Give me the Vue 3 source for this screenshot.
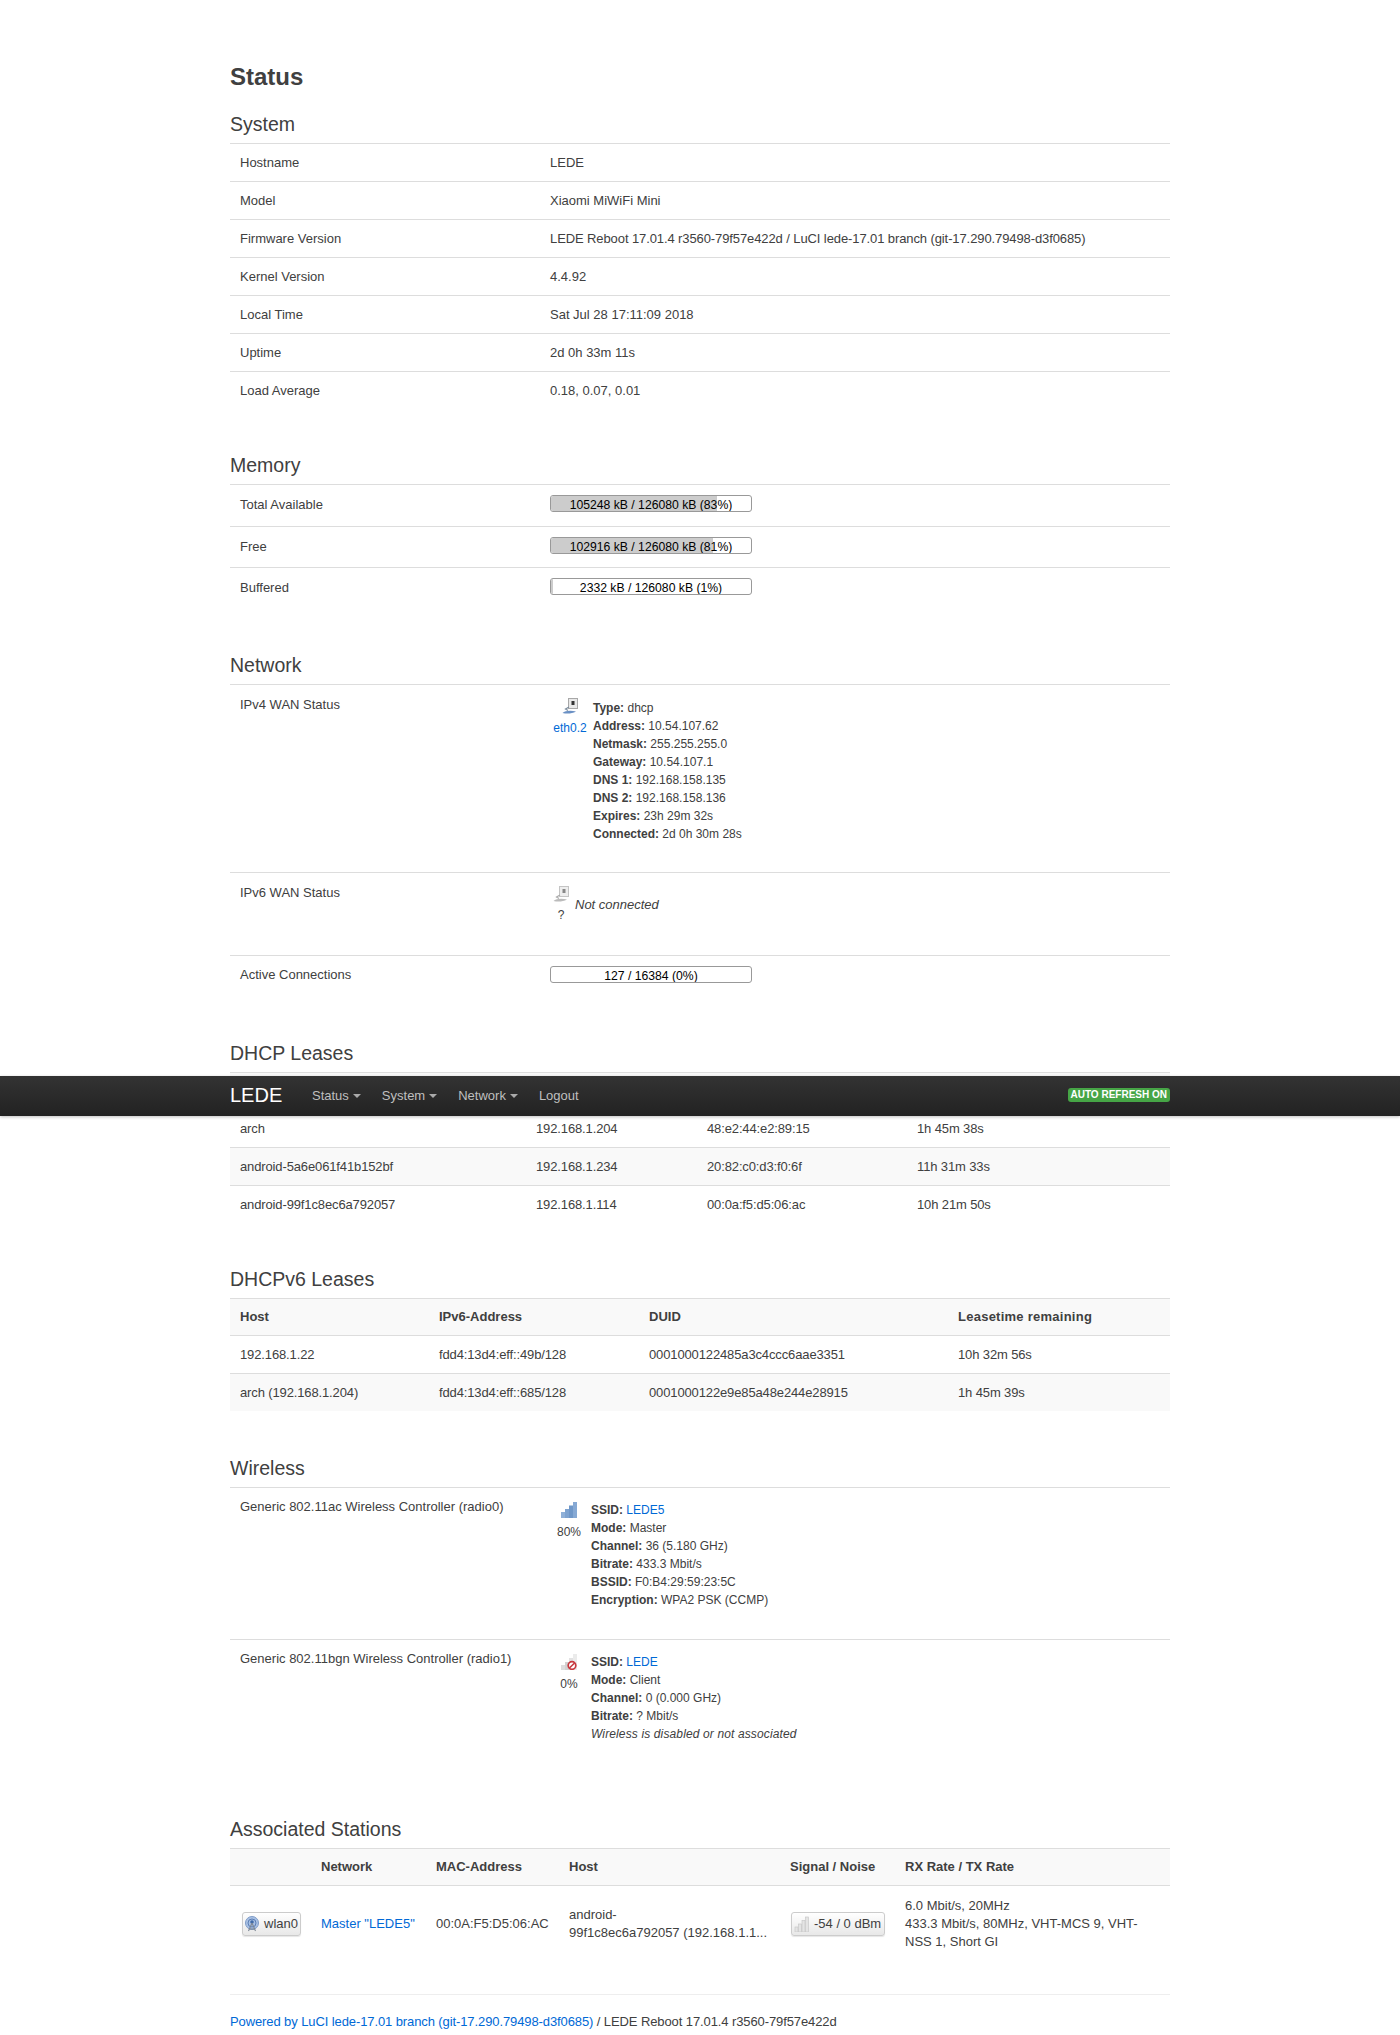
<template>
  <div class="page">
    <header class="navbar">
      <a class="brand">LEDE</a>
      <ul class="menu">
        <li v-for="m in menu" :key="m">{{ m }}<i class="caret"></i></li>
        <li>Logout</li>
      </ul>
      <span class="refresh">AUTO REFRESH ON</span>
    </header>

    <main class="main">
      <h2 class="title">Status</h2>

      <section class="sect">
        <h3>System</h3>
        <div v-for="r in system" :key="r[0]" class="kv">
          <div>{{ r[0] }}</div>
          <div :class="{ tight: r[1].length > 50 }">{{ r[1] }}</div>
        </div>
      </section>

      <section class="sect sect-wide">
        <h3>Memory</h3>
        <div v-for="b in memory" :key="b.label" class="kv kv-bar">
          <div class="bar-label">{{ b.label }}</div>
          <div class="bar">
            <div class="fill" :style="{ width: b.pct + '%' }"></div>
            <span>{{ b.text }}</span>
          </div>
        </div>
      </section>

      <section class="sect sect-wide">
        <h3>Network</h3>
        <div class="kv kv-block kv-wan">
          <div>IPv4 WAN Status</div>
          <div class="ifc">
            <div class="ifc-icon wan">
              <svg width="16" height="16" viewBox="0 0 16 16">
                <rect x="6.5" y="0.5" width="9" height="10" fill="#e8e8e8" stroke="#a8a8a8" />
                <rect x="9.5" y="3" width="3" height="4" fill="#333" />
                <path d="M7 9 L3.5 11 L6 12.5" fill="none" stroke="#7c8c9c" stroke-width="1.2" />
                <path d="M0.5 15 C3 12.5 9 12 14 13.5 C10 15.8 5 16 0.5 15 Z" fill="#6a90c4" />
              </svg>
              <a class="lnk">eth0.2</a>
            </div>
            <div class="info">
              <div v-for="r in wan" :key="r[0]"><b>{{ r[0] }}:</b> {{ r[1] }}</div>
            </div>
          </div>
        </div>
        <div class="kv kv-block kv-wan kv-ipv6">
          <div>IPv6 WAN Status</div>
          <div class="ifc ifc-off">
            <div class="ifc-icon">
              <svg width="16" height="16" viewBox="0 0 16 16">
                <rect x="6.5" y="0.5" width="9" height="10" fill="#eee" stroke="#c4c4c4" />
                <rect x="9.5" y="3" width="3" height="4" fill="#888" />
                <path d="M7 9 L3.5 11 L6 12.5" fill="none" stroke="#aaa" stroke-width="1.2" />
                <path d="M0.5 15 C3 12.5 9 12 14 13.5 C10 15.8 5 16 0.5 15 Z" fill="#bbb" />
              </svg>
              <span>?</span>
            </div>
            <em>Not connected</em>
          </div>
        </div>
        <div class="kv kv-bar">
          <div>Active Connections</div>
          <div class="bar"><span>127 / 16384 (0%)</span></div>
        </div>
      </section>

      <section class="sect">
        <h3>DHCP Leases</h3>
        <table class="tbl t-dhcp t-tight">
          <colgroup><col /><col /><col /><col /></colgroup>
          <thead>
            <tr><th></th><th></th><th></th><th></th></tr>
          </thead>
          <tbody>
            <tr v-for="r in leases" :key="r[0]"><td v-for="c in r" :key="c">{{ c }}</td></tr>
          </tbody>
        </table>
      </section>

      <section class="sect sect-wide">
        <h3>DHCPv6 Leases</h3>
        <table class="tbl t-dhcp6 t-tight">
          <colgroup><col /><col /><col /><col /></colgroup>
          <thead>
            <tr><th>Host</th><th>IPv6-Address</th><th>DUID</th><th>Leasetime remaining</th></tr>
          </thead>
          <tbody>
            <tr v-for="r in leases6" :key="r[0]"><td v-for="c in r" :key="c">{{ c }}</td></tr>
          </tbody>
        </table>
      </section>

      <section class="sect">
        <h3>Wireless</h3>
        <div class="kv kv-block kv-wifi">
          <div>Generic 802.11ac Wireless Controller (radio0)</div>
          <div class="ifc">
            <div class="ifc-icon sig">
              <svg width="16" height="16" viewBox="0 0 16 16">
                <rect x="0" y="10" width="4" height="6" fill="#8fb0d8" />
                <rect x="4" y="7" width="4" height="9" fill="#7ea3d0" />
                <rect x="8" y="3.5" width="4" height="12.5" fill="#6f97c8" />
                <rect x="12" y="0" width="4" height="16" fill="#86a9d4" />
              </svg>
              <span>80%</span>
            </div>
            <div class="info">
              <div><b>SSID:</b> <a class="lnk">LEDE5</a></div>
              <div v-for="r in radio0" :key="r[0]"><b>{{ r[0] }}:</b> {{ r[1] }}</div>
            </div>
          </div>
        </div>
        <div class="kv kv-block kv-wifi">
          <div>Generic 802.11bgn Wireless Controller (radio1)</div>
          <div class="ifc">
            <div class="ifc-icon sig">
              <svg width="16" height="16" viewBox="0 0 16 16">
                <rect x="0" y="11" width="4" height="5" fill="#ddd" />
                <rect x="4" y="8" width="4" height="8" fill="#d2d2d2" />
                <rect x="8" y="4" width="4" height="12" fill="#e2e2e2" />
                <rect x="12" y="0" width="4" height="16" fill="#ebebeb" />
                <circle cx="11" cy="11.5" r="3.8" fill="#fff" stroke="#c8393f" stroke-width="1.7" />
                <path d="M8.4 14 L13.6 9" stroke="#c8393f" stroke-width="1.7" />
              </svg>
              <span>0%</span>
            </div>
            <div class="info">
              <div><b>SSID:</b> <a class="lnk">LEDE</a></div>
              <div v-for="r in radio1" :key="r[0]"><b>{{ r[0] }}:</b> {{ r[1] }}</div>
              <div><em>Wireless is disabled or not associated</em></div>
            </div>
          </div>
        </div>
      </section>

      <section class="sect">
        <h3>Associated Stations</h3>
        <table class="tbl t-assoc">
          <colgroup><col /><col /><col /><col /><col /><col /></colgroup>
          <thead>
            <tr><th></th><th>Network</th><th>MAC-Address</th><th>Host</th><th>Signal / Noise</th><th>RX Rate / TX Rate</th></tr>
          </thead>
          <tbody>
            <tr>
              <td class="badge-cell">
                <span class="badge badge-wlan">
                  <svg width="16" height="16" viewBox="0 0 16 16">
                    <circle cx="8" cy="7" r="6.5" fill="#a9c1e4" stroke="#7f9cc8" />
                    <circle cx="8" cy="7" r="4" fill="none" stroke="#5c7fb5" />
                    <circle cx="8" cy="6" r="1.8" fill="#3f6aa8" />
                    <path d="M8 7 L4.5 15 M8 7 L11.5 15 M5.5 13 H10.5" stroke="#7d8794" stroke-width="1.1" fill="none" />
                  </svg>
                  wlan0
                </span>
              </td>
              <td><a class="lnk">Master "LEDE5"</a></td>
              <td>00:0A:F5:D5:06:AC</td>
              <td>android-<br />99f1c8ec6a792057 (192.168.1.1...</td>
              <td class="badge-cell">
                <span class="badge">
                  <svg width="16" height="16" viewBox="0 0 16 16">
                    <rect x="1" y="11" width="3" height="5" fill="#e4e4e4" stroke="#c4c4c4" stroke-width="0.6" />
                    <rect x="4.5" y="8" width="3" height="8" fill="#e4e4e4" stroke="#c4c4c4" stroke-width="0.6" />
                    <rect x="8" y="4.5" width="3" height="11.5" fill="#e4e4e4" stroke="#c4c4c4" stroke-width="0.6" />
                    <rect x="11.5" y="1" width="3" height="15" fill="#e4e4e4" stroke="#c4c4c4" stroke-width="0.6" />
                  </svg>
                  -54 / 0 dBm
                </span>
              </td>
              <td>6.0 Mbit/s, 20MHz<br />433.3 Mbit/s, 80MHz, VHT-MCS 9, VHT-NSS 1, Short GI</td>
            </tr>
          </tbody>
        </table>
      </section>

      <footer class="foot">
        <a class="lnk">Powered by LuCI lede-17.01 branch (git-17.290.79498-d3f0685)</a> / LEDE Reboot 17.01.4 r3560-79f57e422d
      </footer>
    </main>
  </div>
</template>

<script setup>
const menu = ['Status', 'System', 'Network']

const system = [
  ['Hostname', 'LEDE'],
  ['Model', 'Xiaomi MiWiFi Mini'],
  ['Firmware Version', 'LEDE Reboot 17.01.4 r3560-79f57e422d / LuCI lede-17.01 branch (git-17.290.79498-d3f0685)'],
  ['Kernel Version', '4.4.92'],
  ['Local Time', 'Sat Jul 28 17:11:09 2018'],
  ['Uptime', '2d 0h 33m 11s'],
  ['Load Average', '0.18, 0.07, 0.01']
]

const memory = [
  { label: 'Total Available', pct: 83, text: '105248 kB / 126080 kB (83%)' },
  { label: 'Free', pct: 81, text: '102916 kB / 126080 kB (81%)' },
  { label: 'Buffered', pct: 1, text: '2332 kB / 126080 kB (1%)' }
]

const wan = [
  ['Type', 'dhcp'],
  ['Address', '10.54.107.62'],
  ['Netmask', '255.255.255.0'],
  ['Gateway', '10.54.107.1'],
  ['DNS 1', '192.168.158.135'],
  ['DNS 2', '192.168.158.136'],
  ['Expires', '23h 29m 32s'],
  ['Connected', '2d 0h 30m 28s']
]

const leases = [
  ['arch', '192.168.1.204', '48:e2:44:e2:89:15', '1h 45m 38s'],
  ['android-5a6e061f41b152bf', '192.168.1.234', '20:82:c0:d3:f0:6f', '11h 31m 33s'],
  ['android-99f1c8ec6a792057', '192.168.1.114', '00:0a:f5:d5:06:ac', '10h 21m 50s']
]

const leases6 = [
  ['192.168.1.22', 'fdd4:13d4:eff::49b/128', '0001000122485a3c4ccc6aae3351', '10h 32m 56s'],
  ['arch (192.168.1.204)', 'fdd4:13d4:eff::685/128', '0001000122e9e85a48e244e28915', '1h 45m 39s']
]

const radio0 = [
  ['Mode', 'Master'],
  ['Channel', '36 (5.180 GHz)'],
  ['Bitrate', '433.3 Mbit/s'],
  ['BSSID', 'F0:B4:29:59:23:5C'],
  ['Encryption', 'WPA2 PSK (CCMP)']
]

const radio1 = [
  ['Mode', 'Client'],
  ['Channel', '0 (0.000 GHz)'],
  ['Bitrate', '? Mbit/s']
]
</script>

<style>
body {
  background: #fff;
}
</style>

<style scoped>
.page {
  position: relative;
  font-family: "Liberation Sans", Arial, sans-serif;
  font-size: 13px;
  line-height: 18px;
  color: #404040;
}

.navbar {
  position: absolute;
  top: 1076px;
  left: 0;
  right: 0;
  height: 40px;
  padding: 0 230px;
  box-sizing: border-box;
  display: flex;
  align-items: center;
  background: linear-gradient(#333, #222);
  box-shadow: 0 1px 3px rgba(0, 0, 0, 0.25);
  z-index: 5;
}
.brand {
  font-size: 20px;
  color: #fff;
  width: 82px;
  margin-top: -3px;
}
.menu {
  display: flex;
  list-style: none;
  margin: 0;
  padding: 0;
  color: #bfbfbf;
}
.menu li {
  margin-right: 21px;
}
.caret {
  display: inline-block;
  margin-left: 4px;
  vertical-align: 2px;
  border-top: 4px solid #aaa;
  border-left: 4px solid transparent;
  border-right: 4px solid transparent;
}
.refresh {
  margin-left: auto;
  margin-top: -2px;
  height: 14px;
  padding: 0 3px;
  border-radius: 3px;
  background: #46a546;
  color: #fff;
  font-size: 10px;
  font-weight: bold;
  line-height: 14px;
}

.main {
  width: 940px;
  margin: 0 auto;
  padding: 59px 0 4px;
}
.title {
  margin: 0 0 10px;
  font-size: 24px;
  line-height: 36px;
  font-weight: bold;
}
.sect {
  margin-bottom: 37px;
}
.sect-wide {
  margin-bottom: 38px;
}
.sect h3 {
  margin: 0;
  height: 38px;
  font-size: 19.5px;
  font-weight: normal;
  line-height: 38px;
  border-bottom: 1px solid #ddd;
  box-sizing: content-box;
}

.kv {
  display: grid;
  grid-template-columns: 310px 1fr;
  padding: 10px 10px 9px;
  border-top: 1px solid #ddd;
}
h3 + .kv {
  border-top: 0;
}
.tight {
  letter-spacing: -0.1px;
}
.kv-bar {
  padding-top: 10px;
  height: 41px;
  box-sizing: border-box;
}
.bar-label {
  padding-top: 1px;
}
.kv-block {
  padding: 10px 10px 0;
}
.kv-wan {
  padding-top: 11px;
}

.bar {
  position: relative;
  width: 200px;
  height: 15px;
  border: 1px solid #999;
  border-radius: 3px;
  overflow: hidden;
  text-align: center;
  color: #000;
  background: #fff;
  font-size: 12.2px;
}
.fill {
  position: absolute;
  top: 0;
  left: 0;
  bottom: 0;
  background: #ccc;
}
.bar span {
  position: relative;
  display: block;
  line-height: 18px;
}

.ifc {
  display: flex;
  margin-top: 3px;
  padding-bottom: 30px;
}
.kv-wan .ifc {
  margin-top: 2px;
  padding-bottom: 29px;
}
.ifc-icon {
  display: flex;
  flex-direction: column;
  align-items: center;
  gap: 5px;
  flex: none;
  font-size: 12px;
}
.ifc-icon svg {
  display: block;
}
.wan {
  width: 40px;
  margin-right: 3px;
}
.sig {
  width: 38px;
  margin-right: 3px;
}
.info {
  font-size: 12px;
  padding-top: 1px;
}
.kv-wifi .info {
  padding-top: 0;
}
.kv-wifi .ifc-icon {
  margin-top: 1px;
}
.info b {
  font-weight: bold;
}
.info em {
  letter-spacing: 0.13px;
}
.kv-wan .ifc-off {
  align-items: center;
  padding-bottom: 31px;
}
.ifc-off .ifc-icon {
  width: 22px;
  margin-right: 3px;
  gap: 4px;
}
.lnk {
  color: #0069d6;
}

.tbl {
  width: 940px;
  table-layout: fixed;
  border-collapse: separate;
  border-spacing: 0;
}
.tbl th,
.tbl td {
  padding: 10px 10px 9px;
  text-align: left;
  vertical-align: middle;
  border-top: 1px solid #ddd;
}
.tbl th {
  font-weight: bold;
  padding: 9px 10px;
  height: 18px;
  background: #f9f9f9;
  border-top: 0;
}
.tbl tbody tr:nth-child(even) td {
  background: #f9f9f9;
}
.t-tight td {
  letter-spacing: -0.13px;
}
.t-dhcp6 th:last-child {
  letter-spacing: 0.25px;
}
.t-dhcp col:nth-child(1) { width: 296px; }
.t-dhcp col:nth-child(2) { width: 171px; }
.t-dhcp col:nth-child(3) { width: 210px; }
.t-dhcp col:nth-child(4) { width: 263px; }
.t-dhcp6 col:nth-child(1) { width: 199px; }
.t-dhcp6 col:nth-child(2) { width: 210px; }
.t-dhcp6 col:nth-child(3) { width: 309px; }
.t-dhcp6 col:nth-child(4) { width: 222px; }
.t-assoc col:nth-child(1) { width: 81px; }
.t-assoc col:nth-child(2) { width: 115px; }
.t-assoc col:nth-child(3) { width: 133px; }
.t-assoc col:nth-child(4) { width: 221px; }
.t-assoc col:nth-child(5) { width: 115px; }
.t-assoc col:nth-child(6) { width: 275px; }
.badge-cell {
  white-space: nowrap;
}
.badge {
  display: inline-flex;
  align-items: center;
  gap: 4px;
  height: 24px;
  margin-left: 1px;
  padding: 0 3px 0 2px;
  box-sizing: border-box;
  border: 1px solid #ccc;
  border-radius: 3px;
  background: linear-gradient(#fff, #e8e8e8);
  box-shadow: 0 1px 1px rgba(0, 0, 0, 0.1);
}
.badge-wlan {
  margin-left: 0;
  padding: 0 2px 0 1px;
}
.t-assoc td {
  padding: 11px 10px 10px;
}
.t-assoc .badge-cell:first-child {
  padding-left: 12px;
}

.foot {
  margin-top: -4px;
  padding-top: 18px;
  border-top: 1px solid #eee;
  letter-spacing: -0.1px;
}
</style>
